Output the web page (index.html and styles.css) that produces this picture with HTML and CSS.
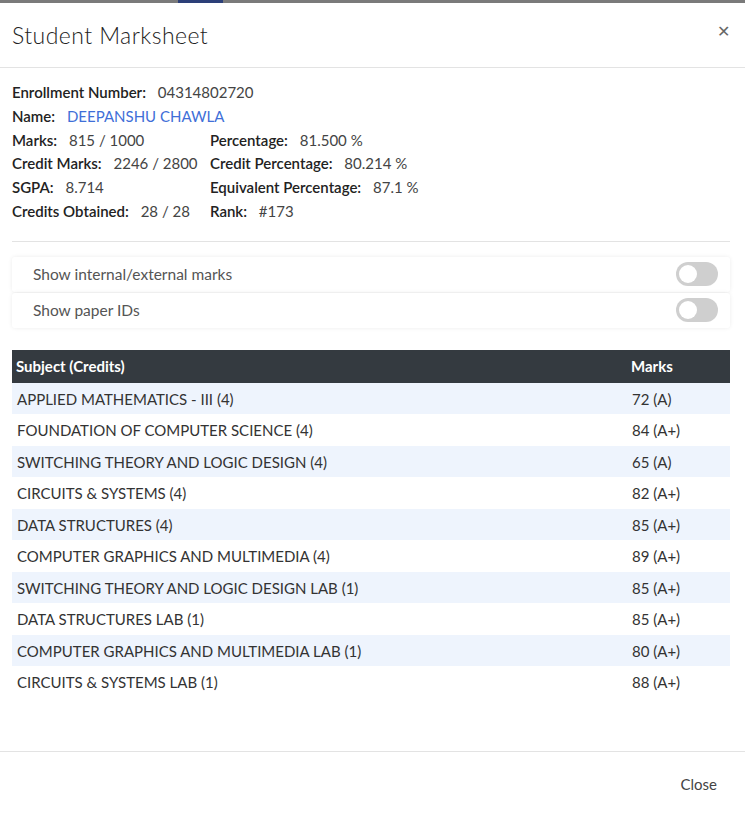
FILE: index.html
```html
<!DOCTYPE html>
<html>
<head>
<meta charset="utf-8">
<link rel="stylesheet" href="styles.css">
</head>
<body>
<div class="backdrop"><span class="tab"></span></div>
<div class="modal">
  <div class="modal-header">
    <h2 class="title">Student Marksheet</h2>
    <span class="close-x">&#x2715;</span>
  </div>
  <div class="modal-body">
    <div class="info">
      <div class="row"><span class="lbl">Enrollment Number:</span> <span class="val">04314802720</span></div>
      <div class="row"><span class="lbl">Name:</span> <span class="val name">DEEPANSHU CHAWLA</span></div>
      <div class="grid">
        <div><span class="lbl">Marks:</span> <span class="val">815 / 1000</span></div>
        <div><span class="lbl">Percentage:</span> <span class="val">81.500 %</span></div>
        <div><span class="lbl">Credit Marks:</span> <span class="val">2246 / 2800</span></div>
        <div><span class="lbl">Credit Percentage:</span> <span class="val">80.214 %</span></div>
        <div><span class="lbl">SGPA:</span> <span class="val">8.714</span></div>
        <div><span class="lbl">Equivalent Percentage:</span> <span class="val">87.1 %</span></div>
        <div><span class="lbl">Credits Obtained:</span> <span class="val">28 / 28</span></div>
        <div><span class="lbl">Rank:</span> <span class="val">#173</span></div>
      </div>
    </div>
    <hr class="sep">
    <div class="toggles">
      <div class="toggle-card"><span>Show internal/external marks</span><span class="switch"><span class="knob"></span></span></div>
      <div class="toggle-card"><span>Show paper IDs</span><span class="switch"><span class="knob"></span></span></div>
    </div>
    <table class="marks">
      <thead>
        <tr><th>Subject (Credits)</th><th class="mcol">Marks</th></tr>
      </thead>
      <tbody>
        <tr><td>APPLIED MATHEMATICS - III (4)</td><td>72 (A)</td></tr>
        <tr><td>FOUNDATION OF COMPUTER SCIENCE (4)</td><td>84 (A+)</td></tr>
        <tr><td>SWITCHING THEORY AND LOGIC DESIGN (4)</td><td>65 (A)</td></tr>
        <tr><td>CIRCUITS &amp; SYSTEMS (4)</td><td>82 (A+)</td></tr>
        <tr><td>DATA STRUCTURES (4)</td><td>85 (A+)</td></tr>
        <tr><td>COMPUTER GRAPHICS AND MULTIMEDIA (4)</td><td>89 (A+)</td></tr>
        <tr><td>SWITCHING THEORY AND LOGIC DESIGN LAB (1)</td><td>85 (A+)</td></tr>
        <tr><td>DATA STRUCTURES LAB (1)</td><td>85 (A+)</td></tr>
        <tr><td>COMPUTER GRAPHICS AND MULTIMEDIA LAB (1)</td><td>80 (A+)</td></tr>
        <tr><td>CIRCUITS &amp; SYSTEMS LAB (1)</td><td>88 (A+)</td></tr>
      </tbody>
    </table>
  </div>
  <div class="modal-footer">
    <span class="close-btn">Close</span>
  </div>
</div>
</body>
</html>
```
FILE: styles.css
```css
* { box-sizing: border-box; }
html, body { margin: 0; padding: 0; background: #fff; }
body {
  font-family: "Lato", "Open Sans", sans-serif;
  color: #333;
  font-size: 15px;
  width: 745px;
  height: 817px;
  overflow: hidden;
}
.backdrop {
  height: 3px;
  background: #7a7a7a;
  position: relative;
}
.tab {
  position: absolute;
  left: 178px;
  top: 0;
  width: 45px;
  height: 3px;
  background: #2c3f78;
}
.modal { background: #fff; }
.modal-header {
  height: 65px;
  display: flex;
  align-items: center;
  justify-content: space-between;
  padding: 0 15px 0 12px;
  border-bottom: 1px solid #e3e3e3;
}
.title {
  margin: 0;
  font-weight: 300;
  font-size: 23px;
  color: #222;
  letter-spacing: 0.45px;
  margin-top: -1px;
}
.close-x {
  font-size: 16px;
  color: #666;
  margin-top: -8px;
}
.modal-body { padding: 13px 15px 0 12px; }
.info { line-height: 23.8px; font-size: 15px; }
.lbl { font-weight: 600; color: #222; }
.val { margin-left: 8px; color: #444; }
.name { color: #3f6fd8; }
.grid {
  display: grid;
  grid-template-columns: 198px auto;
}
.sep {
  border: 0;
  border-top: 1px solid #e3e3e3;
  margin: 17px 0 15px 0;
  width: 718px;
}
.toggles { width: 718px; }
.toggle-card {
  display: flex;
  align-items: center;
  justify-content: space-between;
  height: 35px;
  padding: 0 12px 0 21px;
  background: #fff;
  box-shadow: 0 0 4px rgba(0,0,0,0.08);
  border-radius: 3px;
  color: #555;
  font-size: 15.5px;
}
.toggle-card + .toggle-card { margin-top: 1px; }
.switch {
  width: 42px;
  height: 24px;
  border-radius: 12px;
  background: #cfcfcf;
  display: flex;
  align-items: center;
  padding-left: 3px;
}
.knob {
  width: 18px;
  height: 18px;
  border-radius: 50%;
  background: #fff;
}
.marks {
  margin-top: 22px;
  width: 718px;
  border-collapse: collapse;
  font-size: 15px;
}
.marks th {
  background: #343a40;
  color: #fff;
  text-align: left;
  font-weight: 700;
  height: 33px;
  padding: 0 4px;
}
.marks td {
  height: 31.5px;
  padding: 0 4px 0 5px;
  color: #333;
}
.marks .mcol { width: 103px; }
.marks tbody tr:nth-child(odd) td { background: #eef4fd; }
.modal-footer {
  margin-top: 53px;
  border-top: 1px solid #e3e3e3;
  height: 66px;
  display: flex;
  align-items: center;
  justify-content: flex-end;
  padding-right: 28px;
}
.close-btn { color: #444; font-size: 15px; margin-top: 0; }
```
